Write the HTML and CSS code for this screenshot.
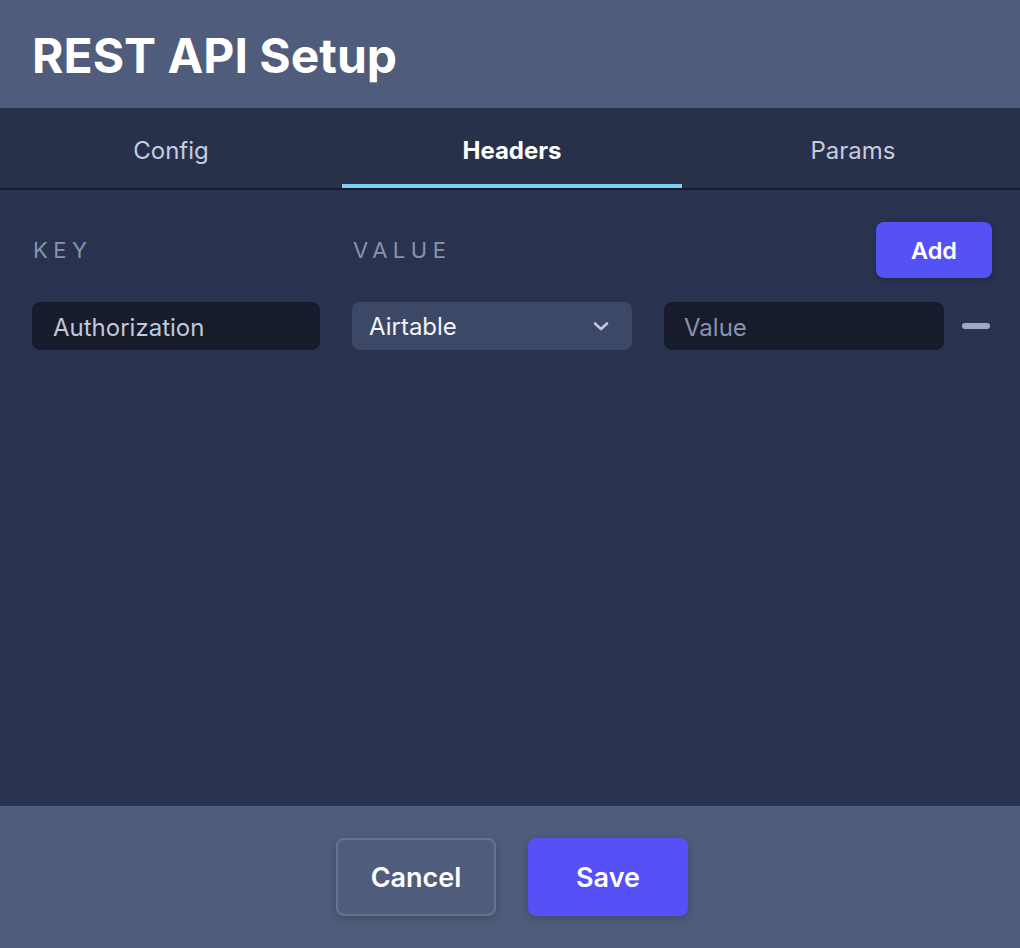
FILE: index.html
```html
<!DOCTYPE html>
<html>
<head>
<meta charset="utf-8">
<link rel="stylesheet" href="styles.css">
</head>
<body>
<div class="modal">
  <header class="modal-header">
    <h1 class="title">REST API Setup</h1>
  </header>
  <nav class="tabs">
    <div class="tab">Config</div>
    <div class="tab active">Headers</div>
    <div class="tab tab-last">Params</div>
  </nav>
  <main class="content">
    <div class="labels">
      <span class="label key-label">KEY</span>
      <span class="label">VALUE</span>
      <button class="btn-add">Add</button>
    </div>
    <div class="row">
      <div class="field key-field">Authorization</div>
      <div class="field select-field">
        <span>Airtable</span>
        <svg class="chevron" width="18" height="12" viewBox="0 0 18 12"><path d="M3 3.5 L9 9 L15 3.5" fill="none" stroke="#c3c9d8" stroke-width="2.6" stroke-linecap="round" stroke-linejoin="round"/></svg>
      </div>
      <div class="field value-field">Value</div>
      <div class="minus"></div>
    </div>
  </main>
  <footer class="modal-footer">
    <button class="btn btn-cancel">Cancel</button>
    <button class="btn btn-save">Save</button>
  </footer>
</div>
</body>
</html>
```

FILE: styles.css
```css
* { box-sizing: border-box; }
html, body { margin: 0; padding: 0; }
body {
  width: 1020px;
  height: 948px;
  font-family: Inter, "Noto Sans", sans-serif;
  background: #283149;
}
.modal {
  display: flex;
  flex-direction: column;
  height: 948px;
}
.modal-header {
  height: 108px;
  background: #505c7b;
  display: flex;
  align-items: center;
  padding-left: 32px;
}
.title {
  margin: 0;
  color: #ffffff;
  font-size: 48px;
  font-weight: 700;
  padding-top: 2px;
}
.tabs {
  display: grid;
  grid-template-columns: 342px 340px 338px;
  height: 82px;
  background: #283149;
  border-bottom: 2px solid #171d2c;
}
.tab {
  display: flex;
  align-items: center;
  justify-content: center;
  font-size: 24px;
  color: #c3cde0;
  padding-top: 4px;
}
.tab.active {
  color: #ffffff;
  font-weight: 700;
  border-bottom: 4px solid #7dcdf4;
  padding-top: 8px;
}
.tab-last {
  padding-left: 4px;
}
.content {
  flex: 1;
  background: #293350;
  padding: 32px 28px 32px 32px;
}
.labels {
  display: flex;
  align-items: center;
  height: 56px;
}
.label {
  font-size: 22px;
  letter-spacing: 5.5px;
  color: #8893ad;
  padding-left: 1px;
}
.key-label { width: 320px; }
.btn-add {
  margin-left: auto;
  width: 116px;
  height: 56px;
  border: none;
  border-radius: 8px;
  background: #5451f5;
  color: #ffffff;
  font-family: Inter, sans-serif;
  font-size: 23.5px;
  font-weight: 600;
  box-shadow: 0 2px 6px rgba(0,0,0,0.2);
}
.row {
  display: flex;
  align-items: center;
  gap: 32px;
  margin-top: 24px;
}
.field {
  height: 48px;
  border-radius: 8px;
  display: flex;
  align-items: center;
  font-size: 24px;
}
.key-field {
  width: 288px;
  background: #161c2b;
  color: #c0c8d9;
  padding-left: 21px;
  padding-top: 2px;
}
.select-field {
  width: 280px;
  background: #3d4866;
  color: #f2f4f8;
  padding: 0 22px 0 17px;
  justify-content: space-between;
}
.value-field {
  width: 280px;
  background: #161c2b;
  color: #8893ad;
  padding-left: 20px;
  padding-top: 2px;
}
.minus {
  width: 28px;
  height: 6px;
  border-radius: 3px;
  background: #a2aac0;
  margin-left: -14px;
}
.modal-footer {
  height: 142px;
  background: #505c7b;
  display: flex;
  align-items: center;
  justify-content: center;
  gap: 32px;
  padding-left: 4px;
}
.btn {
  width: 160px;
  height: 78px;
  border-radius: 8px;
  font-family: Inter, sans-serif;
  font-size: 27px;
  font-weight: 600;
  color: #ffffff;
  box-shadow: 0 3px 8px rgba(0,0,0,0.18);
}
.btn-cancel {
  background: #505c7b;
  border: 2px solid #68728f;
}
.btn-save {
  background: #5650f7;
  border: none;
}
```
